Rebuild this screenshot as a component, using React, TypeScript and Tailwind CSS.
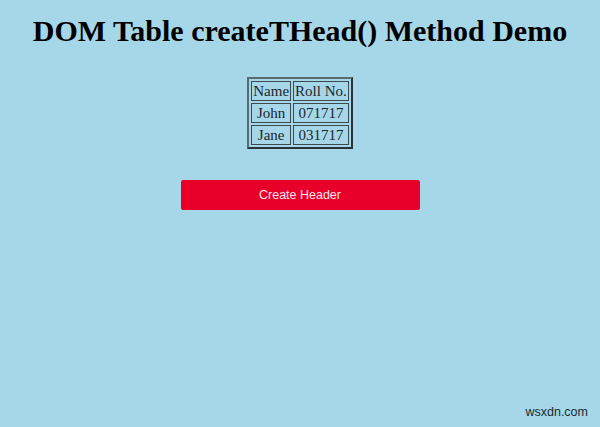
export default function App() {
  const rows = [
    ["John", "071717"],
    ["Jane", "031717"],
  ];
  return (
    <div className="relative h-[427px] w-full overflow-hidden bg-[#a6d7e8] text-black" style={{ fontFamily: '"Liberation Serif", serif' }}>
      <h1 className="pt-[12px] text-center text-[30px] font-bold leading-[38px]">DOM Table createTHead() Method Demo</h1>
      <div className="mt-[27px] flex justify-center">
        <table className="border-separate border-spacing-[2px] border-2 border-[#5a6a70] border-r-[#2a3438] border-b-[#2a3438] text-[15px] text-[#1c262a]">
          <tbody>
            <tr>
              <td className="border border-[#3c4a50] px-[1px] leading-[18px]">Name</td>
              <td className="border border-[#3c4a50] px-[1px] leading-[18px]">Roll No.</td>
            </tr>
            {rows.map((r) => (
              <tr key={r[0]}>
                <td className="border border-[#3c4a50] px-[1px] text-center leading-[18px]">{r[0]}</td>
                <td className="border border-[#3c4a50] px-[1px] text-center leading-[18px]">{r[1]}</td>
              </tr>
            ))}
          </tbody>
        </table>
      </div>
      <div className="mt-[31px] flex justify-center">
        <button className="h-[30px] w-[239px] rounded-[2px] bg-[#e8002a] text-[12.5px] text-[#fde4ea]" style={{ fontFamily: '"Liberation Sans", Arial, sans-serif' }}>
          Create Header
        </button>
      </div>
      <div className="absolute bottom-[5px] right-[12px] text-[12.5px] text-[#1a2a30]" style={{ fontFamily: '"Liberation Sans", Arial, sans-serif' }}>
        wsxdn.com
      </div>
    </div>
  );
}
